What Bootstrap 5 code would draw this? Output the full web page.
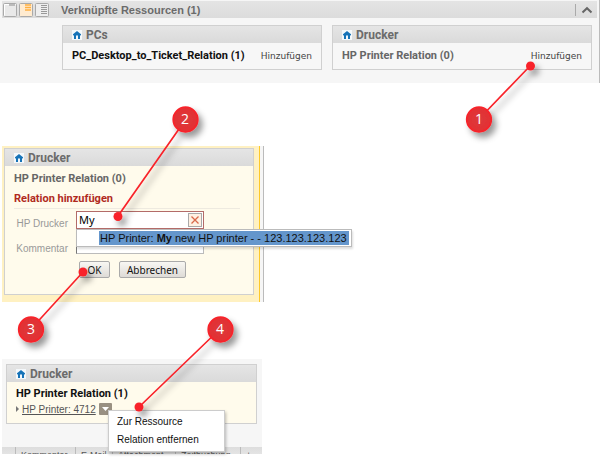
<!DOCTYPE html>
<html lang="de">
<head>
<meta charset="utf-8">
<meta name="viewport" content="width=device-width, initial-scale=1">
<title>Verknüpfte Ressourcen</title>
<link rel="stylesheet" href="https://cdn.jsdelivr.net/npm/bootstrap@5.3.0/dist/css/bootstrap.min.css">
<style>
body{font:11px/14px "Liberation Sans",Arial,sans-serif;color:#111;background:#fff}
.stage{min-height:459px;overflow:hidden}
.overview{background:#f6f6f6;border-right:1px solid #bbb;padding:1px 2px 13px}
.titlebar{background:linear-gradient(#e4e4e4,#dcdcdc);height:17px;gap:2px;padding-left:1px}
.titlebar h1{font:bold 11px/16px "Liberation Sans",Arial,sans-serif;color:#6b6b6b;margin:0 0 0 10px}
.viewbtn{width:14px;height:14px;line-height:0}
.fold{border-left:1px solid #aaa!important;width:22px;height:12px;line-height:0}
.pair{padding:7px 5px 0 60px;gap:10px}
.panel{border:1px solid #d0d0d0;background:#f7f7f7;min-width:0}
.panel-head{background:linear-gradient(#e5e5e5,#dadada);height:17px;gap:4px;padding-left:9px;font:bold 12px/16px Roboto,"Liberation Sans",sans-serif;color:#6b6b6b;margin:0}
.panel-head svg{flex:none}
.rel{font:bold 11px/14px Roboto,"Liberation Sans",sans-serif;margin:0}
.muted{color:#666}
.addlink{font:9px/14px "DejaVu Sans",sans-serif;color:#444;text-decoration:none}
.overview .panel-row{height:26px;padding:0 9px}
.editing{max-width:262px;margin:63px 0 0 2px;padding:2px 9px 7px 2px;background:#fff1c2;position:relative;border-right:1px solid #bbb}
.editing::after{content:"";position:absolute;right:0;top:0;bottom:0;width:4px;background:#f6f6f6;border-left:1px solid #ffc928}
.editing .panel{background:#fffbec}
.editing .panel-body{padding:6px 13px 16px 9px}
.section-title{font:bold 11px/14px Roboto,"Liberation Sans",sans-serif;color:#b02a1e;margin:6px 0 0;padding-bottom:2px;border-bottom:1px solid #eeeae0}
.form-grid{display:grid;grid-template-columns:62px 128px;row-gap:5px;margin-top:2px;position:relative}
.form-grid label{color:#999;font-size:10px;line-height:14px;text-align:right;padding:6px 8px 0 0}
.field{height:18px;border:1px solid #b36b68;background:#fff}
.field input{width:100%;min-width:0;border:0;outline:0;padding:0 2px;font:11px/14px "Noto Sans",sans-serif;background:transparent}
.field button{flex:none;width:14px;height:14px;margin-right:1px;line-height:0;border:1px solid #a9a9a9;background:#fff0e2;padding:0}
.note{width:100%;height:18px;border:1px solid #bbb;border-left-color:#777;background:#fff;padding:0 2px}
.suggest{position:absolute;z-index:2;left:62px;top:18px;width:276px;border:1px solid #bbb;background:#fff;padding:1px 2px 1px 22px;box-shadow:1px 2px 2px #0002}
.suggest button{width:100%;border:0;background:#6496cc;color:#111;padding:0 1px;font-size:11px;line-height:14px;white-space:nowrap;text-align:left}
.pushes{gap:9px;padding:5px 0 0 65px}
.pushes button{font:10px/14px "Noto Sans",sans-serif;height:17px;border:1px solid #aaa;border-radius:2px;background:linear-gradient(#f8f7f3,#dedbd7);color:#111;padding:0}
.ok{width:31px}.cancel{width:67px}
.linked{max-width:260px;margin:57px 0 0 2px;padding:5px 5px 0 4px;background:#f6f6f6;position:relative}
.linked .panel{background:#fffbec}
.linked .panel-body{padding:5px 9px 6px}
.item{height:16px;gap:3px}
.item a{color:#555;font-size:10px;line-height:13px;text-decoration:underline}
.item button{width:13px;height:12px;border:0;padding:0;background:#999082;line-height:0;border-radius:1px}
.popup{position:absolute;z-index:2;left:106px;top:51px;width:117px;padding:2px 0;background:#fff;border:1px solid #ccc;box-shadow:1px 2px 3px #0004}
.popup button{width:100%;border:0;background:none;text-align:left;padding:0 8px;color:#111;font:10px/18px "Liberation Sans",Arial,sans-serif;white-space:nowrap}
.cols{display:grid;grid-template-columns:60px 37px 63px 65px 1fr;margin:23px -5px 0 -4px;height:7px;overflow:hidden;background:linear-gradient(#ddd,#e4e4e4);font-size:9px;line-height:16px;color:#555;padding-left:13px}
.cols span{border-left:1px solid #bbb;padding-left:5px}
.callouts{position:absolute;left:0;top:0;z-index:5;pointer-events:none}
</style>
<script src="https://cdn.jsdelivr.net/npm/bootstrap@5.3.0/dist/js/bootstrap.bundle.min.js"></script>
</head>
<body>
<svg width="0" height="0" class="position-absolute" aria-hidden="true">
<symbol id="house" viewBox="0 0 10 10"><path fill="#f4f8fb" d="M0 0h10v10H0z"/><path fill="#1673b8" d="M5 1 1 4.200V5.500l1-.3V9h2V6.300a1 1 0 0 1 2 0V9h2V5.200l1 .3V4.200z"/></symbol>
</svg>
<main class="stage position-relative">
<section class="overview">
  <div class="titlebar d-flex align-items-center">
    <button class="viewbtn border-0 p-0 bg-transparent" aria-label="Klein"><svg width="14" height="14"><rect x=".5" y=".5" width="13" height="13" rx="1" fill="#e9e9e9" stroke="#aaa"/><path d="M1.500 12.500v-11h11" fill="none" stroke="#fff"/><path d="M6 2h6" stroke="#bbb" stroke-width="2"/></svg></button>
    <button class="viewbtn border-0 p-0 bg-transparent" aria-label="Mittel"><svg width="14" height="14"><rect x=".5" y=".5" width="13" height="13" rx="1" fill="#ffebd0" stroke="#aaa"/><path d="M6 2h6M6 4.500h6M6 7h6" stroke="#ffb040" stroke-width="1.500"/></svg></button>
    <button class="viewbtn border-0 p-0 bg-transparent" aria-label="Groß"><svg width="14" height="14"><rect x=".5" y=".5" width="13" height="13" rx="1" fill="#eee" stroke="#aaa"/><path d="M6 2.500h6M6 4.500h6M6 6.500h6M6 8.500h6M6 10.500h6" stroke="#999"/></svg></button>
    <h1>Verknüpfte Ressourcen (1)</h1>
    <button class="fold ms-auto border-0 p-0 bg-transparent" aria-label="Einklappen"><svg width="12" height="8"><path d="M1.500 6.500 6 2.200l4.500 4.300" fill="none" stroke="#666" stroke-width="2"/></svg></button>
  </div>
  <div class="pair d-flex">
    <article class="panel flex-fill w-50">
      <h2 class="panel-head d-flex align-items-center"><svg width="10" height="10"><use href="#house"/></svg>PCs</h2>
      <div class="panel-row d-flex align-items-center justify-content-between"><h3 class="rel">PC_Desktop_to_Ticket_Relation (1)</h3><a class="addlink" href="#">Hinzufügen</a></div>
    </article>
    <article class="panel flex-fill w-50">
      <h2 class="panel-head d-flex align-items-center"><svg width="10" height="10"><use href="#house"/></svg>Drucker</h2>
      <div class="panel-row d-flex align-items-center justify-content-between"><h3 class="rel muted">HP Printer Relation (0)</h3><a class="addlink" href="#">Hinzufügen</a></div>
    </article>
  </div>
</section>

<section class="editing">
  <article class="panel">
    <h2 class="panel-head d-flex align-items-center"><svg width="10" height="10"><use href="#house"/></svg>Drucker</h2>
    <div class="panel-body">
      <h3 class="rel muted">HP Printer Relation (0)</h3>
      <h4 class="section-title">Relation hinzufügen</h4>
      <form onsubmit="return false">
        <div class="form-grid">
          <label for="printer">HP Drucker</label>
          <div class="field d-flex align-items-center"><input id="printer" type="text" value="My"><button type="button" aria-label="Leeren"><svg width="12" height="12"><path d="m2.500 2.500 7 7m0-7-7 7" stroke="#d9694a" stroke-width="1.300"/></svg></button></div>
          <label for="note">Kommentar</label>
          <input class="note" id="note" type="text">
          <div class="suggest"><button type="button">HP Printer: <b>My</b> new HP printer - - 123.123.123.123</button></div>
        </div>
        <div class="pushes d-flex"><button class="ok">OK</button><button type="button" class="cancel">Abbrechen</button></div>
      </form>
    </div>
  </article>
</section>

<section class="linked">
  <article class="panel">
    <h2 class="panel-head d-flex align-items-center"><svg width="10" height="10"><use href="#house"/></svg>Drucker</h2>
    <div class="panel-body">
      <h3 class="rel">HP Printer Relation (1)</h3>
      <div class="item d-flex align-items-center"><svg width="3" height="6"><path d="m0 0 3 3-3 3z" fill="#777"/></svg><a href="#">HP Printer: 4712</a><button aria-label="Menü"><svg width="9" height="6"><path d="M1 1h7L4.500 5z" fill="#fff"/></svg></button></div>
    </div>
  </article>
  <div class="popup"><button>Zur Ressource</button><button>Relation entfernen</button></div>
  <div class="cols"><span>Kommentar</span><span>E-Mail</span><span>Attachment</span><span>Zeitbuchung</span><span>+</span></div>
</section>

<svg class="callouts" width="600" height="459" aria-hidden="true">
  <defs>
    <filter id="shade" x="-30%" y="-30%" width="170%" height="170%"><feDropShadow dx="4" dy="5" stdDeviation="3" flood-opacity=".4"/></filter>
    <radialGradient id="ball"><stop offset="0" stop-color="#dd3a3c"/><stop offset="1" stop-color="#e32f32"/></radialGradient>
  </defs>
  <g filter="url(#shade)" stroke="#f8242a" stroke-width="1.700">
    <path d="M479 119 530 66M186 119 118 216M31 329 83 272M220 329 139 407"/>
    <g fill="#f8242a" stroke="none"><circle cx="530.500" cy="66" r="4.500"/><circle cx="118" cy="216.500" r="4.500"/><circle cx="83" cy="272" r="4.500"/><circle cx="139" cy="407" r="4.500"/></g>
    <g fill="url(#ball)"><circle cx="479" cy="119.500" r="12.300"/><circle cx="185.500" cy="119.500" r="12.300"/><circle cx="31" cy="329.500" r="12.300"/><circle cx="220.500" cy="329.500" r="12.300"/></g>
  </g>
  <g fill="#fff" font-family="Open Sans, sans-serif" font-size="14" text-anchor="middle"><text x="479" y="124">1</text><text x="185" y="124">2</text><text x="31" y="334">3</text><text x="220" y="334">4</text></g>
</svg>
</main>
</body>
</html>
